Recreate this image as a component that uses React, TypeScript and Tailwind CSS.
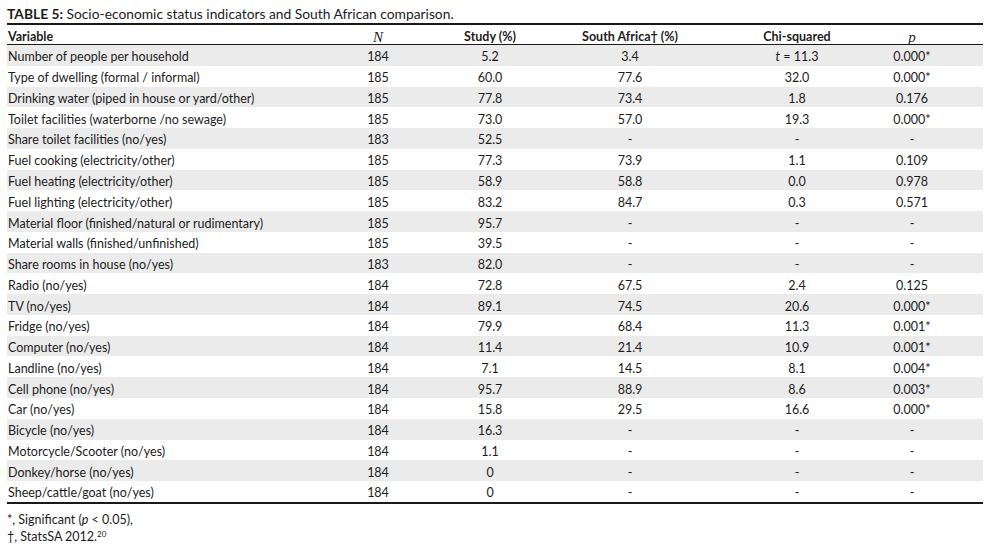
import React from "react";

type Row = [string, string, string, string, string, string];

const rows: Row[] = [
  ["Number of people per household", "184", "5.2", "3.4", "T", "0.000*"],
  ["Type of dwelling (formal / informal)", "185", "60.0", "77.6", "32.0", "0.000*"],
  ["Drinking water (piped in house or yard/other)", "185", "77.8", "73.4", "1.8", "0.176"],
  ["Toilet facilities (waterborne /no sewage)", "185", "73.0", "57.0", "19.3", "0.000*"],
  ["Share toilet facilities (no/yes)", "183", "52.5", "-", "-", "-"],
  ["Fuel cooking (electricity/other)", "185", "77.3", "73.9", "1.1", "0.109"],
  ["Fuel heating (electricity/other)", "185", "58.9", "58.8", "0.0", "0.978"],
  ["Fuel lighting (electricity/other)", "185", "83.2", "84.7", "0.3", "0.571"],
  ["Material floor (finished/natural or rudimentary)", "185", "95.7", "-", "-", "-"],
  ["Material walls (finished/unfinished)", "185", "39.5", "-", "-", "-"],
  ["Share rooms in house (no/yes)", "183", "82.0", "-", "-", "-"],
  ["Radio (no/yes)", "184", "72.8", "67.5", "2.4", "0.125"],
  ["TV (no/yes)", "184", "89.1", "74.5", "20.6", "0.000*"],
  ["Fridge (no/yes)", "184", "79.9", "68.4", "11.3", "0.001*"],
  ["Computer (no/yes)", "184", "11.4", "21.4", "10.9", "0.001*"],
  ["Landline (no/yes)", "184", "7.1", "14.5", "8.1", "0.004*"],
  ["Cell phone (no/yes)", "184", "95.7", "88.9", "8.6", "0.003*"],
  ["Car (no/yes)", "184", "15.8", "29.5", "16.6", "0.000*"],
  ["Bicycle (no/yes)", "184", "16.3", "-", "-", "-"],
  ["Motorcycle/Scooter (no/yes)", "184", "1.1", "-", "-", "-"],
  ["Donkey/horse (no/yes)", "184", "0", "-", "-", "-"],
  ["Sheep/cattle/goat (no/yes)", "184", "0", "-", "-", "-"],
];

const grid = "grid grid-cols-[315px_112px_112px_168px_166px_64px_1fr] items-center";

export default function App() {
  return (
    <div
      className="w-[992px] h-[545px] bg-white text-[#1c1c1c] overflow-hidden"
      style={{ fontFamily: "Lato, 'Open Sans', sans-serif" }}
    >
      <div className="ml-[7px] w-[976px]">
        <div className="pt-[5px] h-[23px] text-[13.8px] leading-[17px] whitespace-nowrap">
          <span className="font-bold">TABLE 5:</span> Socio-economic status indicators and South African comparison.
        </div>
        <div className="h-[2px] bg-[#1a1a1a]" />
        <div className={`${grid} h-[20px] pt-[3px] text-[12.5px] font-bold border-b border-[#1a1a1a]`}>
          <div className="pl-[1px]">Variable</div>
          <div className="text-center font-normal italic text-[15px] leading-[15px]" style={{ fontFamily: "'Liberation Serif', serif" }}>
            N
          </div>
          <div className="text-center">Study (%)</div>
          <div className="text-center">South Africa† (%)</div>
          <div className="text-center">Chi-squared</div>
          <div className="text-center font-normal italic text-[15px] leading-[15px]" style={{ fontFamily: "'Liberation Serif', serif" }}>
            p
          </div>
          <div />
        </div>
        {rows.map((r, i) => (
          <div
            key={i}
            className={`${grid} h-[20.77px] pt-[4px] text-[12.5px] leading-[16px] ${i % 2 === 0 ? "bg-[#ebebeb]" : "bg-white"}`}
          >
            <div className="pl-[1px] whitespace-nowrap">{r[0]}</div>
            <div className="text-center">{r[1]}</div>
            <div className="text-center">{r[2]}</div>
            <div className="text-center">{r[3]}</div>
            <div className="text-center">
              {r[4] === "T" ? (
                <span>
                  <span className="italic">t</span> = 11.3
                </span>
              ) : (
                r[4]
              )}
            </div>
            <div className="text-center">{r[5]}</div>
            <div />
          </div>
        ))}
        <div className="h-[2px] bg-[#1a1a1a]" />
        <div className="pt-[7px] text-[12.5px] leading-[17px]">
          <div>
            *, Significant (<span className="italic">p</span> &lt; 0.05),
          </div>
          <div>
            †, StatsSA 2012.<sup className="text-[8px]">20</sup>
          </div>
        </div>
      </div>
    </div>
  );
}
